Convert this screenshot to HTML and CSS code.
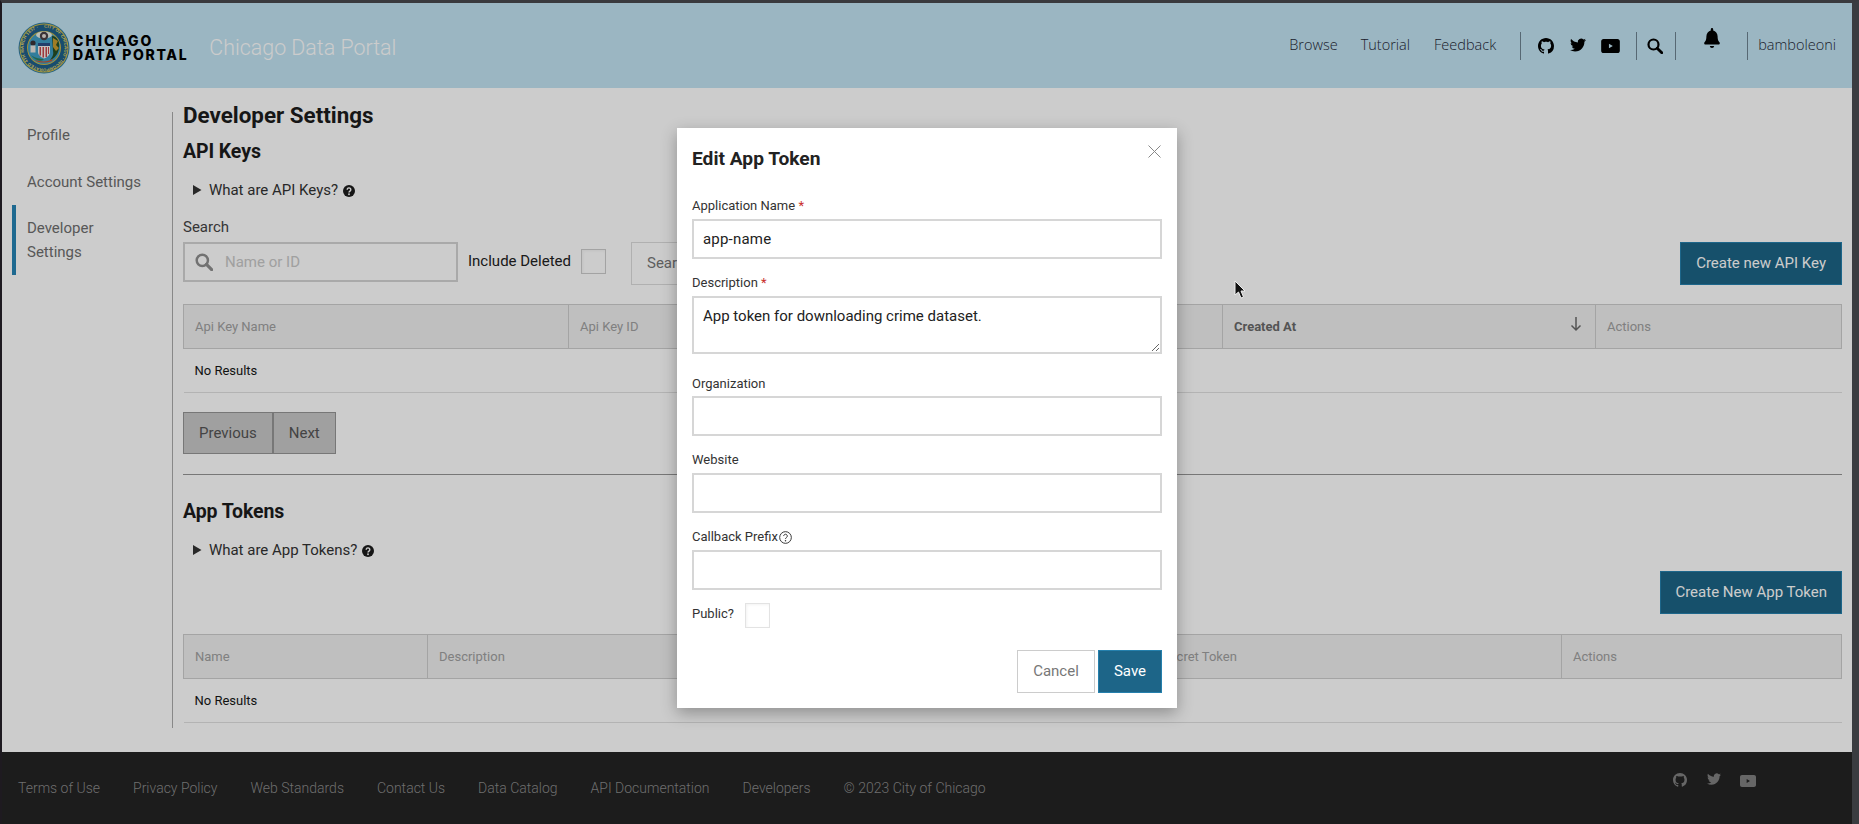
FILE: index.html
```html
<!DOCTYPE html>
<html lang="en">
<head>
<meta charset="utf-8">
<title>Developer Settings | Chicago Data Portal</title>
<link rel="stylesheet" href="styles.css">
</head>
<body>
<svg class="defs" width="0" height="0" aria-hidden="true">
  <defs>
    <symbol id="i-github" viewBox="0 0 16 16"><path fill-rule="evenodd" d="M8 0C3.58 0 0 3.58 0 8c0 3.54 2.29 6.53 5.47 7.59.4.07.55-.17.55-.38 0-.19-.01-.82-.01-1.49-2.01.37-2.53-.49-2.69-.94-.09-.23-.48-.94-.82-1.13-.28-.15-.68-.52-.01-.53.63-.01 1.08.58 1.23.82.72 1.21 1.87.87 2.33.66.07-.52.28-.87.51-1.07-1.78-.2-3.64-.89-3.64-3.95 0-.87.31-1.59.82-2.15-.08-.2-.36-1.02.08-2.12 0 0 .67-.21 2.2.82.64-.18 1.32-.27 2-.27.68 0 1.36.09 2 .27 1.53-1.04 2.2-.82 2.2-.82.44 1.1.16 1.92.08 2.12.51.56.82 1.27.82 2.15 0 3.07-1.87 3.75-3.65 3.95.29.25.54.73.54 1.48 0 1.07-.01 1.93-.01 2.2 0 .21.15.46.55.38A8.013 8.013 0 0016 8c0-4.42-3.58-8-8-8z"/></symbol>
    <symbol id="i-twitter" viewBox="0 0 24 24"><path d="M23.953 4.57a10 10 0 01-2.825.775 4.958 4.958 0 002.163-2.723c-.951.555-2.005.959-3.127 1.184a4.92 4.92 0 00-8.384 4.482C7.69 8.095 4.067 6.13 1.64 3.162a4.822 4.822 0 00-.666 2.475c0 1.71.87 3.213 2.188 4.096a4.904 4.904 0 01-2.228-.616v.06a4.923 4.923 0 003.946 4.827 4.996 4.996 0 01-2.212.085 4.936 4.936 0 004.604 3.417 9.867 9.867 0 01-6.102 2.105c-.39 0-.779-.023-1.17-.067a13.995 13.995 0 007.557 2.209c9.053 0 13.998-7.496 13.998-13.985 0-.21 0-.42-.015-.63A9.935 9.935 0 0024 4.59z"/></symbol>
    <symbol id="i-youtube" viewBox="0 0 24 18"><path fill-rule="evenodd" d="M21 0H3C1.3 0 0 1.3 0 3v12c0 1.7 1.3 3 3 3h18c1.7 0 3-1.3 3-3V3c0-1.700-1.300-3-3-3zM10 12V6l5 3z"/></symbol>
    <symbol id="i-search" viewBox="0 0 16 16"><circle cx="6.500" cy="6.500" r="5" fill="none" stroke="currentColor" stroke-width="2.200"/><path d="M10.200 10.200l4.600 4.600" fill="none" stroke="currentColor" stroke-width="2.800" stroke-linecap="round"/></symbol>
    <symbol id="i-help" viewBox="0 0 16 16"><circle cx="8" cy="8" r="8" fill="currentColor"/><path d="M5.600 6.200a2.400 2.300 0 1 1 3.700 1.900c-.9.600-1.300 1-1.300 1.900" fill="none" stroke="#fff" stroke-width="1.900"/><circle cx="8" cy="12.300" r="1.200" fill="#fff"/></symbol>
    <symbol id="i-help-o" viewBox="0 0 16 16"><circle cx="8" cy="8" r="7.200" fill="none" stroke="currentColor" stroke-width="1.200"/><path d="M5.800 6.200a2.200 2.200 0 1 1 3.400 1.800c-.8.600-1.200 1-1.200 1.900" fill="none" stroke="currentColor" stroke-width="1.200"/><circle cx="8" cy="12" r=".9" fill="currentColor"/></symbol>
  </defs>
</svg>

<div class="window">
  <div class="page">
    <header class="topbar">
      <a class="brand">
        <svg class="seal" viewBox="0 0 52 52" aria-hidden="true">
          <circle cx="26" cy="26" r="25.500" fill="#2c7aa6"/>
          <circle cx="26" cy="26" r="24.500" fill="#c9b84a"/>
          <circle cx="26" cy="26" r="23.500" fill="#1e5f8a"/>
          <path id="ring" d="M26 5.500a20.500 20.500 0 1 1-.01 0" fill="none"/>
          <text class="seal-text"><textPath href="#ring">CITY OF CHICAGO · INCORPORATED 4TH MARCH 1837 ·</textPath></text>
          <circle cx="26" cy="26" r="17" fill="#c9b84a"/>
          <circle cx="26" cy="26" r="16" fill="#3f9dc4"/>
          <ellipse cx="26" cy="13" rx="8" ry="3.500" fill="#e8efe6"/>
          <circle cx="26" cy="14" r="4.200" fill="#4a4045"/>
          <circle cx="26" cy="14" r="2" fill="#e8e2da"/>
          <path d="M20 21h12v9c0 3-3 5.500-6 6.500-3-1-6-3.500-6-6.500z" fill="#f6f2ee"/>
          <path d="M20 21h12v3H20z" fill="#2b4f86"/>
          <path d="M21.500 25h1.500v8.500h-1.500zM24.500 25H26v10.500h-1.500zM27.500 25H29v10h-1.500zM30 25h1v7h-1z" fill="#c4464a"/>
          <path d="M34 14c5 0 8 6 7 12-1 6-4 10-9 12 2-3 4-5 3-9z" fill="#264f26"/>
          <path d="M35 16l5 3-2 4 3 3-3 3-3-4z" fill="#c99c2f"/>
          <circle cx="15" cy="21" r="2.600" fill="#3a3338"/>
          <path d="M12.500 23.500h5v7h-5z" fill="#e9e4df"/>
          <path d="M17 38c6 2 13 2 18-1l-1 2c-5 2-12 2-16 0z" fill="#c9552f"/>
          <path d="M13 33c5 4 9 3 13 4.500-4 2.500-9 1-13-4.500z" fill="#2f7f5c"/>
        </svg>
        <span class="wordmark"><span class="wm-top">CHICAGO</span><span>DATA PORTAL</span></span>
      </a>
      <span class="site-title">Chicago Data Portal</span>
      <nav class="topnav">
        <a class="nav-link">Browse</a>
        <a class="nav-link">Tutorial</a>
        <a class="nav-link">Feedback</a>
        <span class="vsep sep-a"></span>
        <svg class="ic ic-gh"><use href="#i-github"/></svg>
        <svg class="ic ic-tw"><use href="#i-twitter"/></svg>
        <svg class="ic ic-yt"><use href="#i-youtube"/></svg>
        <span class="vsep sep-b"></span>
        <svg class="ic ic-se"><use href="#i-search"/></svg>
        <span class="vsep sep-c"></span>
        <svg class="ic-bell" viewBox="0 0 16 20"><path d="M8 20a2.300 2.300 0 0 0 2.200-2H5.800A2.300 2.300 0 0 0 8 20zM15.500 14.200c-.8-.8-1.900-2-1.900-6 0-2.900-2.100-5.300-4.400-5.800V1.300a1.200 1.200 0 0 0-2.400 0v1.100C4.500 2.900 2.400 5.300 2.400 8.200c0 4-1.100 5.200-1.900 6-.5.500-.5 2.300.6 2.300h13.800c1.100 0 1.100-1.800.6-2.300z"/></svg>
        <span class="vsep sep-d"></span>
        <a class="nav-link user">bamboleoni</a>
      </nav>
    </header>

    <div class="main">
      <aside class="sidebar">
        <a class="side-item">Profile</a>
        <a class="side-item">Account Settings</a>
        <a class="side-item active">Developer Settings</a>
      </aside>
      <section class="content">
        <h1 class="page-title">Developer Settings</h1>
        <h2 class="section-title">API Keys</h2>
        <details class="explain"><summary>What are API Keys? <svg class="help"><use href="#i-help"/></svg></summary></details>
        <label class="search-label">Search</label>
        <div class="toolbar">
          <div class="search-box">
            <svg class="search-ic"><use href="#i-search"/></svg>
            <input class="search-input" placeholder="Name or ID">
          </div>
          <span class="include">Include Deleted</span>
          <input class="check check-page" type="checkbox">
          <button class="btn btn-plain">Search</button>
          <button class="btn btn-primary push">Create new API Key</button>
        </div>
        <table class="grid grid-keys">
          <colgroup><col class="k1"><col class="k2"><col class="k3"><col class="k4"></colgroup>
          <thead><tr><th>Api Key Name</th><th>Api Key ID</th><th class="sorted">Created At<svg class="sort" viewBox="0 0 12 16"><path d="M6 1v13M1.500 9.500L6 14l4.500-4.500" fill="none" stroke="currentColor" stroke-width="1.500"/></svg></th><th>Actions</th></tr></thead>
          <tbody><tr><td colspan="4">No Results</td></tr></tbody>
        </table>
        <div class="pager"><button class="btn btn-page">Previous</button><button class="btn btn-page">Next</button></div>
        <hr class="rule">
        <h2 class="section-title tokens">App Tokens</h2>
        <details class="explain"><summary>What are App Tokens? <svg class="help"><use href="#i-help"/></svg></summary></details>
        <div class="toolbar-right"><button class="btn btn-primary btn-token">Create New App Token</button></div>
        <table class="grid grid-tokens">
          <colgroup><col class="t1"><col class="t2"><col class="t3"><col class="t4"></colgroup>
          <thead><tr><th>Name</th><th>Description</th><th>Secret Token</th><th>Actions</th></tr></thead>
          <tbody><tr><td colspan="4">No Results</td></tr></tbody>
        </table>
      </section>
    </div>

    <footer class="footer">
      <a class="foot-link">Terms of Use</a>
      <a class="foot-link">Privacy Policy</a>
      <a class="foot-link">Web Standards</a>
      <a class="foot-link">Contact Us</a>
      <a class="foot-link">Data Catalog</a>
      <a class="foot-link">API Documentation</a>
      <a class="foot-link">Developers</a>
      <span class="foot-link foot-copy">© 2023 City of Chicago</span>
      <div class="foot-icons">
        <svg class="fi fi-gh"><use href="#i-github"/></svg>
        <svg class="fi fi-tw"><use href="#i-twitter"/></svg>
        <svg class="fi fi-yt"><use href="#i-youtube"/></svg>
      </div>
    </footer>

    <div class="overlay"></div>

    <form class="modal">
      <svg class="close" viewBox="0 0 13 13"><path d="M.5.500l12 12M12.500.500l-12 12" fill="none" stroke="currentColor" stroke-width="1"/></svg>
      <h3 class="modal-title">Edit App Token</h3>
      <label class="f-label">Application Name <span class="req">*</span></label>
      <input class="f-input" value="app-name">
      <label class="f-label">Description <span class="req">*</span></label>
      <textarea class="f-input f-area">App token for downloading crime dataset.</textarea>
      <label class="f-label f-after-area">Organization</label>
      <input class="f-input">
      <label class="f-label">Website</label>
      <input class="f-input">
      <label class="f-label">Callback Prefix<svg class="help-o"><use href="#i-help-o"/></svg></label>
      <input class="f-input">
      <div class="public-row"><label class="public-label">Public?</label><input class="check check-modal" type="checkbox"></div>
      <div class="modal-actions"><button type="button" class="btn btn-cancel">Cancel</button><button type="button" class="btn btn-save">Save</button></div>
    </form>

    <svg class="cursor" viewBox="0 0 12 19"><path d="M1 1v14l3.500-3 2.500 6 2.500-1-2.500-6H11z" fill="#111" stroke="#eee" stroke-width="1"/></svg>
  </div>
</div>
</body>
</html>
```

FILE: styles.css
```css
* { box-sizing: border-box; }
html, body { margin: 0; padding: 0; }
body { font-family: Roboto, "Liberation Sans", sans-serif; color: #222; background: #3a3c40; overflow: hidden; }
.defs { position: absolute; }
a { color: inherit; text-decoration: none; }

.window {
  width: 1859px; height: 824px; overflow: hidden;
  border-top: 3px solid #3a3a3e; border-left: 2px solid #1e1a20; border-right: 7px solid #3a3c40;
}
.page { position: relative; height: 821px; display: flex; flex-direction: column; background: #fff; }

/* Header */
.topbar { height: 85px; flex: none; display: flex; align-items: center; background: #c2e4f3; padding: 0 16px; }
.brand { display: flex; align-items: center; margin-top: 4px; }
.seal { width: 52px; height: 52px; display: block; }
.seal-text { font: 700 4.300px "Liberation Sans", sans-serif; fill: #e8d868; letter-spacing: .12px; }
.wordmark { display: flex; flex-direction: column; margin-left: 3px; font: 800 14px/13.500px Inter, "DejaVu Sans", sans-serif; letter-spacing: 1.650px; color: #000; }
.wm-top { letter-spacing: 2px; }
.site-title { margin-left: 21px; margin-top: 3px; font-weight: 300; font-size: 21.400px; color: #fff; }
.topnav { margin-left: auto; display: flex; align-items: center; color: #1f2736; }
.nav-link { font: 300 14.500px/20px "Open Sans", sans-serif; margin-right: 24px; margin-bottom: 1px; white-space: nowrap; }
.nav-link:first-child { margin-right: 23px; }
.nav-link.user { margin-right: 0; margin-left: 10px; }
.vsep { width: 1px; height: 28px; background: #6d8290; }
.sep-a { margin-right: 17px; }
.sep-b { margin-left: 16px; margin-right: 10px; }
.sep-c { margin-left: 12px; margin-right: 28px; }
.sep-d { margin-left: 27px; }
.ic { fill: #000; color: #000; display: block; }
.ic-gh { width: 16px; height: 16px; margin-right: 16px; }
.ic-tw { width: 16px; height: 16px; margin-right: 15px; margin-bottom: 2px; }
.ic-yt { width: 19px; height: 14px; }
.ic-se { width: 16px; height: 16px; margin-top: 1px; }
.ic-bell { width: 16px; height: 20px; margin-bottom: 15px; fill: #000; display: block; }

/* Main */
.main { flex: 1; display: flex; min-height: 0; background: #fff; }
.sidebar { width: 171px; height: 616px; margin-top: 24px; flex: none; border-right: 1px solid #aaa; padding-left: 10px; display: flex; flex-direction: column; font-size: 15px; line-height: 24px; color: #6e6e6e; }
.side-item { display: block; padding: 0 4px 0 11px; margin-top: 23px; border-left: 4px solid transparent; width: 135px; }
.side-item:first-child { margin-top: 11px; }
.side-item.active { border-left-color: #2684b4; padding-top: 11px; padding-bottom: 11px; margin-top: 11px; }
.content { flex: 1; min-width: 0; padding: 13px 10px 0 10px; }
.page-title { margin: 0; font-size: 22.400px; line-height: 28px; font-weight: 700; color: #1c1c1c; }
.section-title { margin: 10px 0 0; font-size: 19.500px; line-height: 26px; font-weight: 700; color: #1c1c1c; letter-spacing: -.1px; }
.section-title.tokens { margin-top: 24px; }
.explain { margin-top: 15px; padding-left: 10px; font-size: 15px; line-height: 20px; color: #333; }
.explain summary { cursor: pointer; }
.help { width: 12px; height: 12px; margin-left: 1px; vertical-align: -2px; color: #1c1c1c; }
.search-label { display: block; margin-top: 17px; font-size: 15px; line-height: 20px; color: #444; }
.toolbar { display: flex; align-items: flex-start; margin-top: 5px; height: 43px; }
.search-box { width: 275px; height: 40px; display: flex; align-items: center; border: 2px solid #d4d4d4; background: #fff; padding-left: 10px; }
.search-ic { width: 18px; height: 18px; color: #8f8f8f; flex: none; }
.search-input { border: 0; outline: 0; padding: 0 0 0 12px; font: 15px Roboto, sans-serif; min-width: 0; flex: 1; background: transparent; }
.search-input::placeholder { color: #c8c8c8; opacity: 1; }
.include { margin: 9px 0 0 10px; font-size: 15px; line-height: 20px; color: #222; }
.check { appearance: none; -webkit-appearance: none; display: block; width: 25px; height: 25px; margin: 0; background: #fff; border: 1px solid #e3e3e3; box-shadow: inset 1px 1px 3px rgba(0,0,0,.05); }
.check-page { margin: 7px 0 0 10px; border-color: #ccc; }
.btn { font: 15px Roboto, sans-serif; height: 43px; padding: 0 15px 1px; border: 1px solid transparent; cursor: pointer; }
.btn-plain { margin-left: 25px; background: #fff; border-color: #ddd; color: #777; }
.btn-primary { background: #1c6486; border-color: #2580ad; color: #fff; }
.btn-token { padding: 0 14px 2px; }
.push { margin-left: auto; }
.toolbar-right { margin-top: 11px; display: flex; justify-content: flex-end; }

.grid { width: 100%; border-collapse: collapse; table-layout: fixed; }
.grid-keys { margin-top: 19px; }
.grid-tokens { margin-top: 20px; }
.k1 { width: 385px; } .k2 { width: 654px; } .k3 { width: 373px; } .k4 { width: auto; }
.t1 { width: 244px; } .t2 { width: 723px; } .t3 { width: 411px; } .t4 { width: auto; }
.grid th { height: 44px; padding: 0 11px; background: #efefef; border: 1px solid #cdcdcd; text-align: left; font-weight: 400; font-size: 13px; color: #a0a0a0; position: relative; }
.grid th.sorted { font-weight: 700; color: #6a6a6a; }
.sort { position: absolute; right: 13px; top: 11px; width: 12px; height: 16px; color: #6a6a6a; }
.grid td { height: 44px; padding: 0 11px; font-size: 13px; color: #161616; border-bottom: 1px solid #e0e0e0; }
.pager { display: flex; margin-top: 19px; }
.btn-page { height: 42px; background: #c8c8c8; border-color: #959595; color: #555; padding: 0 15px; }
.rule { margin: 20px 0 0; border: 0; border-top: 1px solid #959595; }

/* Footer */
.footer { height: 72px; flex: none; display: flex; align-items: center; background: #232323; padding-left: 16px; padding-right: 96px; }
.foot-link { font-size: 14px; font-weight: 300; line-height: 20px; color: #8a8a8a; margin-right: 33px; white-space: nowrap; }
.foot-copy { margin-right: 0; }
.foot-icons { margin-left: auto; align-self: flex-start; display: flex; margin-top: 20px; color: #808080; fill: #808080; }
.fi { display: block; }
.fi-gh { width: 14px; height: 14px; margin-top: 1px; margin-right: 20px; }
.fi-tw { width: 14px; height: 14px; margin-right: 19px; }
.fi-yt { width: 16px; height: 12px; margin-top: 3px; }

/* Modal */
.overlay { position: absolute; inset: 0; background: rgba(0,0,0,.2); }
.modal { position: absolute; left: 675px; top: 125px; width: 500px; height: 580px; background: #fff; padding: 17px 15px 15px; box-shadow: 0 5px 15px rgba(0,0,0,.3); }
.close { position: absolute; left: 471px; top: 17px; width: 13px; height: 13px; color: #888; }
.modal-title { margin: 0 0 23px; font-size: 19.200px; line-height: 28px; font-weight: 700; color: #222; }
.f-label { display: block; font-size: 13px; line-height: 20px; color: #333; margin: 14px 0 3px; }
.modal-title + .f-label { margin-top: 0; }
.f-label.f-after-area { margin-top: 20px; margin-bottom: 2px; }
.req { color: #c9302c; }
.help-o { width: 13px; height: 13px; margin-left: 1px; vertical-align: -3px; color: #333; }
.f-input { display: block; width: 100%; height: 40px; border: 2px solid #d6d6d6; border-radius: 0; padding: 0 9px; font: 15px Roboto, sans-serif; color: #222; letter-spacing: .2px; background: #fff; outline: 0; }
.f-area { height: 58px; padding: 8px 9px; line-height: 20px; resize: vertical; letter-spacing: 0; }
.public-row { display: flex; align-items: flex-start; margin-top: 13px; }
.public-label { font-size: 13px; line-height: 20px; color: #333; margin-top: 1px; }
.check-modal { margin-left: 11px; }
.modal-actions { display: flex; justify-content: flex-end; margin-top: 22px; }
.btn-cancel { width: 78px; padding: 0 0 2px; background: #fff; border-color: #ccc; color: #777; }
.btn-save { width: 64px; padding: 0 0 2px; margin-left: 3px; background: #1d6588; border-color: #2580ad; color: #fff; }
.cursor { position: absolute; left: 1232px; top: 277px; width: 12px; height: 19px; }
```
